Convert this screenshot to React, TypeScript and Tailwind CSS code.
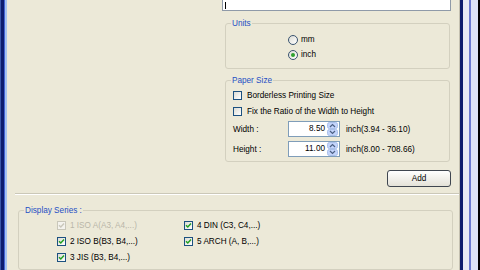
import React from 'react';

const font = "font-['Liberation_Sans',Arial,sans-serif]";

const Check: React.FC<{ on?: boolean; disabled?: boolean }> = ({ on = true, disabled }) => (
  <span
    className={`w-[9px] h-[9px] shrink-0 border flex items-center justify-center ${
      disabled ? 'border-[#c9c7ba] bg-[#f4f3ee]' : 'border-[#1c5180] bg-gradient-to-br from-[#dcdcd5] to-white'
    }`}
  >
    {on && (
      <svg width="7" height="7" viewBox="0 0 7 7">
        <path d="M1 3.2 L2.8 5 L6 1.6" fill="none" stroke={disabled ? '#cac8bb' : '#21a121'} strokeWidth="1.5" />
      </svg>
    )}
  </span>
);

const Radio: React.FC<{ on?: boolean; label: string }> = ({ on, label }) => (
  <div className="h-[15px] flex items-center gap-[3px]">
    <span className="w-[10px] h-[10px] rounded-full border border-[#3a5470] bg-gradient-to-br from-[#dcdcd5] to-white flex items-center justify-center">
      {on && <span className="w-[4px] h-[4px] rounded-full bg-[#2fa12f]" />}
    </span>
    <span>{label}</span>
  </div>
);

const Spinner: React.FC<{ value: string }> = ({ value }) => (
  <div className="w-[52px] h-[16px] border border-[#7f9db9] bg-white flex items-center justify-end pr-[1px] gap-[2px]">
    <span className="leading-none">{value}</span>
    <svg width="11" height="14" viewBox="0 0 11 14">
      <rect x="0.5" y="0.5" width="10" height="6" rx="2" fill="#c3d4fb" stroke="#a9bfe9" />
      <rect x="0.5" y="7.5" width="10" height="6" rx="2" fill="#c3d4fb" stroke="#a9bfe9" />
      <path d="M3 5 L5.5 2.5 L8 5" fill="none" stroke="#4d6185" strokeWidth="1.2" />
      <path d="M3 9 L5.5 11.5 L8 9" fill="none" stroke="#4d6185" strokeWidth="1.2" />
    </svg>
  </div>
);

const Series: React.FC<{ label: string; disabled?: boolean }> = ({ label, disabled }) => (
  <div className={`h-[16px] flex items-center gap-[4px] ${disabled ? 'text-[#b9b6a8]' : 'text-black'}`}>
    <Check disabled={disabled} />
    <span>{label}</span>
  </div>
);

export default function App() {
  return (
    <div className={`w-[480px] h-[270px] flex overflow-hidden bg-[#ece9d8] text-black text-[8.2px] leading-[11px] ${font}`}>
      {/* left window frame */}
      <div className="flex shrink-0">
        <div className="w-px bg-[#3a56a8]" />
        <div className="w-[3px] bg-[#0c1c6e]" />
        <div className="w-px bg-[#4262d2]" />
        <div className="w-[2px] bg-[#a4c2f2]" />
      </div>

      <div className="w-[452px] flex flex-col shrink-0">
        <div className="h-[193px] flex">
          <div className="w-[215px]" />
          <div className="w-[229px] flex flex-col">
            <div className="h-[11px] bg-white border border-t-0 border-[#8f9aa8] flex items-center pl-[2px]">
              <span className="w-px h-[7px] bg-black" />
            </div>

            <fieldset className="mt-[7px] ml-[3px] w-[225px] border border-[#d3d0bf] rounded-[3px]">
              <legend className="ml-[5px] px-[1px] text-[#1f4fc4]">Units</legend>
              <div className="pl-[62px] pt-[3px] pb-[6px]">
                <Radio label="mm" />
                <Radio on label="inch" />
              </div>
            </fieldset>

            <fieldset className="mt-[6px] ml-[3px] w-[225px] border border-[#d3d0bf] rounded-[3px]">
              <legend className="ml-[5px] px-[1px] text-[#1f4fc4]">Paper Size</legend>
              <div className="pl-[7px] pt-[1px] pb-[4px]">
                <div className="h-[16px] flex items-center gap-[5px]">
                  <Check on={false} />
                  <span>Borderless Printing Size</span>
                </div>
                <div className="h-[16px] flex items-center gap-[5px]">
                  <Check on={false} />
                  <span>Fix the Ratio of the Width to Height</span>
                </div>
                <div className="mt-[2px] flex items-center">
                  <span className="w-[55px]">Width :</span>
                  <Spinner value="8.50" />
                  <span className="ml-[6px]">inch(3.94 - 36.10)</span>
                </div>
                <div className="mt-[4px] flex items-center">
                  <span className="w-[55px]">Height :</span>
                  <Spinner value="11.00" />
                  <span className="ml-[6px]">inch(8.00 - 708.66)</span>
                </div>
              </div>
            </fieldset>

            <button className="mt-[8px] self-end w-[64px] h-[17px] rounded-[3px] border border-[#3f4650] bg-gradient-to-b from-white to-[#e4e2d8] flex items-center justify-center">
              Add
            </button>
          </div>
        </div>

        <div className="ml-[8px] h-[2px] border-t border-[#cbc8b8] border-b border-b-white" />

        <fieldset className="mt-[10px] ml-[11px] w-[435px] border border-[#d3d0bf] rounded-[3px]">
          <legend className="ml-[5px] px-[1px] text-[#1f4fc4]">Display Series :</legend>
          <div className="pl-[38px] pt-[1px] pb-[4px] grid grid-flow-col grid-rows-3 grid-cols-[127px_auto]">
            <Series disabled label="1 ISO A(A3, A4,...)" />
            <Series label="2 ISO B(B3, B4,...)" />
            <Series label="3 JIS (B3, B4,...)" />
            <Series label="4 DIN (C3, C4,...)" />
            <Series label="5 ARCH (A, B,...)" />
          </div>
        </fieldset>
      </div>

      {/* right window frame */}
      <div className="flex shrink-0">
        <div className="w-px bg-[#c4c0b0]" />
        <div className="w-[3px] bg-[#0c1c6e]" />
        <div className="w-[6px] bg-[#e6eaf6]" />
        <div className="w-[2px] bg-[#6b7ad0]" />
        <div className="w-[7px] bg-[#dde3f6]" />
        <div className="w-[2px] bg-black" />
      </div>
    </div>
  );
}
